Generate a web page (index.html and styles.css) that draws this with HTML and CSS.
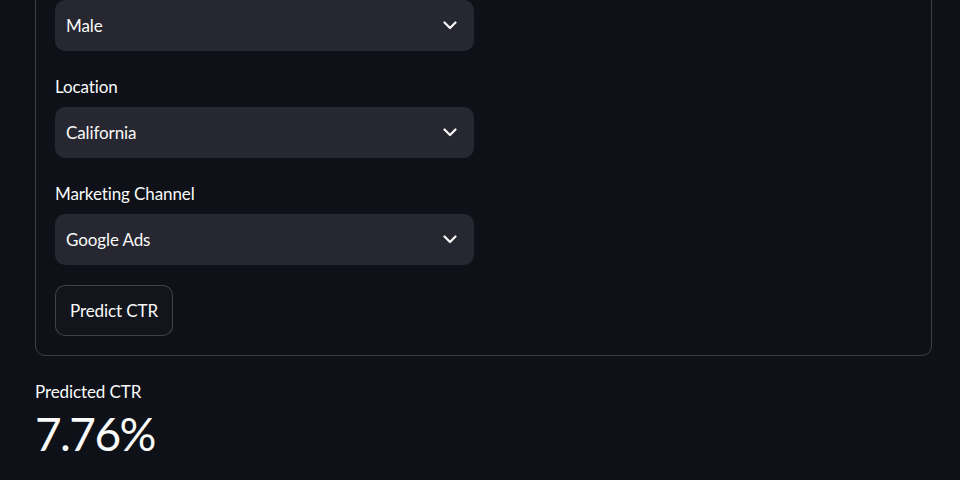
FILE: index.html
```html
<!DOCTYPE html>
<html lang="en">
<head>
<meta charset="utf-8">
<title>CTR Prediction</title>
<link rel="stylesheet" href="styles.css">
</head>
<body>
<main class="main">
  <form class="form">
    <div class="field">
      <div class="select"><span>Male</span><svg class="chev" width="14" height="9" viewBox="0 0 14 9"><polyline points="1.5,1.5 7,7 12.5,1.5" fill="none" stroke="#fafafa" stroke-width="2.2" stroke-linecap="round" stroke-linejoin="round"/></svg></div>
    </div>
    <div class="field">
      <label class="label">Location</label>
      <div class="select"><span>California</span><svg class="chev" width="14" height="9" viewBox="0 0 14 9"><polyline points="1.5,1.5 7,7 12.5,1.5" fill="none" stroke="#fafafa" stroke-width="2.2" stroke-linecap="round" stroke-linejoin="round"/></svg></div>
    </div>
    <div class="field">
      <label class="label">Marketing Channel</label>
      <div class="select"><span>Google Ads</span><svg class="chev" width="14" height="9" viewBox="0 0 14 9"><polyline points="1.5,1.5 7,7 12.5,1.5" fill="none" stroke="#fafafa" stroke-width="2.2" stroke-linecap="round" stroke-linejoin="round"/></svg></div>
    </div>
    <div class="actions">
      <button type="button" class="btn">Predict CTR</button>
    </div>
  </form>
  <section class="metric">
    <div class="metric-label">Predicted CTR</div>
    <div class="metric-value">7.76%</div>
  </section>
</main>
</body>
</html>
```

FILE: styles.css
```css
* { box-sizing: border-box; }
html, body {
  margin: 0;
  padding: 0;
  background: #0e1117;
  color: #fafafa;
  font-family: "Source Sans Pro", "Lato", "Noto Sans", sans-serif;
  overflow: hidden;
}
.main {
  width: 960px;
  padding: 0 28px 0 35px;
  display: flex;
  flex-direction: column;
}
.form {
  margin-top: -21px;
  border: 1px solid rgba(250, 250, 250, 0.2);
  border-radius: 10px;
  padding: 20px 19px 19px;
  display: flex;
  flex-direction: column;
  gap: 24px;
}
.field {
  display: flex;
  flex-direction: column;
  width: 419px;
}
.label {
  font-size: 17px;
  line-height: 24px;
  height: 24px;
  margin-bottom: 8px;
  letter-spacing: -0.1px;
}
.select {
  height: 51px;
  background: #262730;
  border-radius: 10px;
  display: flex;
  align-items: center;
  justify-content: space-between;
  padding: 0 17px 0 11px;
  font-size: 17px;
  letter-spacing: -0.1px;
}
.chev { display: block; }
.actions { margin-top: -4px; }
.btn {
  height: 51px;
  padding: 0 14px;
  background: #12151c;
  color: #fafafa;
  border: 1px solid rgba(250, 250, 250, 0.2);
  border-radius: 10px;
  font-family: inherit;
  font-size: 17px;
  letter-spacing: -0.1px;
}
.metric {
  margin-top: 24px;
  display: flex;
  flex-direction: column;
}
.metric-label {
  font-size: 17px;
  line-height: 24px;
  letter-spacing: -0.1px;
}
.metric-value {
  font-size: 46px;
  line-height: 60px;
  letter-spacing: -1.6px;
  font-weight: 400;
}
```
